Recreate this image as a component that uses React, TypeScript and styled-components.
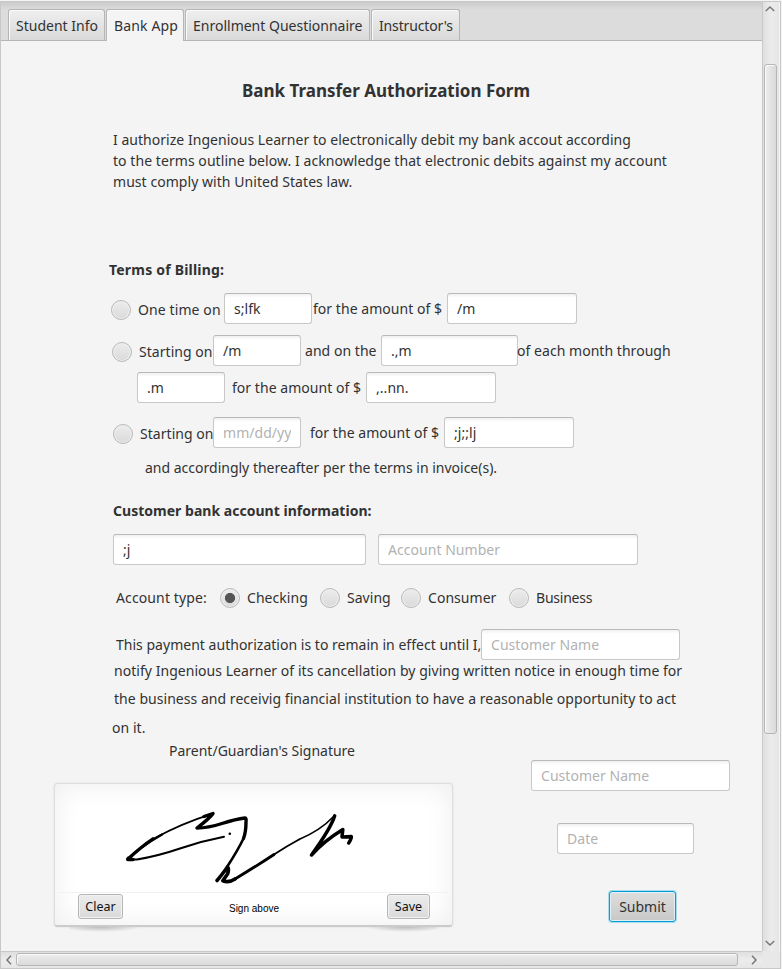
import React from "react";
import styled, { createGlobalStyle } from "styled-components";

const GlobalStyle = createGlobalStyle`
  * { box-sizing: border-box; }
  body {
    margin: 0;
    background: #f4f4f4;
    color: #323232;
    font: 14px/21px "Noto Sans", sans-serif;
    letter-spacing: 0.04px;
  }
`;

const Page = styled.div`
  width: 782px;
  height: 969px;
  padding-top: 1px;
  overflow: hidden;
  background: #f4f4f4;
`;

const Window = styled.div`
  display: grid;
  grid-template-columns: 761px 18px;
  grid-template-rows: 949px 17px;
  width: 781px;
  height: 968px;
  border: 1px solid #c8c8c8;
`;

const Pane = styled.main`
  overflow: hidden;
`;

const TabBar = styled.nav`
  display: flex;
  align-items: flex-end;
  gap: 1px;
  height: 39px;
  padding-left: 7px;
  border-bottom: 1px solid #b5b5b5;
  background: linear-gradient(#cbcbcb, #dcdcdc 8px);
`;

const Tab = styled.button<{ $w: number; $active?: boolean; $ls?: number }>`
  flex: none;
  width: ${(p) => p.$w}px;
  height: ${(p) => (p.$active ? 32 : 31)}px;
  margin-bottom: ${(p) => (p.$active ? -1 : 0)}px;
  padding: ${(p) => (p.$active ? "5px 0 5px 7px" : "5px 0 4px 7px")};
  border: 1px solid #b5b5b5;
  border-bottom: 0;
  border-radius: 3px 3px 0 0;
  background: ${(p) => (p.$active ? "#f4f4f4" : "linear-gradient(#efefef, #d9d9d9)")};
  box-shadow: inset 1px 1px 0 #fafafa;
  color: inherit;
  font: inherit;
  letter-spacing: ${(p) => p.$ls ?? 0}px;
  text-align: left;
  white-space: nowrap;
`;

const Form = styled.form`
  display: flex;
  flex-direction: column;
`;

const Title = styled.h1`
  margin: 37px 0 0 241px;
  font-size: 17px;
  line-height: 25px;
  letter-spacing: 0;
`;

const Heading = styled.h2<{ $top: number; $left: number; $ls?: number }>`
  margin: ${(p) => p.$top}px 0 0 ${(p) => p.$left}px;
  font-size: 14px;
  line-height: 21px;
  letter-spacing: ${(p) => p.$ls ?? 0}px;
`;

const Row = styled.div<{ $top: number; $left: number }>`
  display: flex;
  align-items: center;
  height: 31px;
  margin-top: ${(p) => p.$top}px;
  padding-left: ${(p) => p.$left}px;
`;

const Text = styled.span<{ $w?: number; $ml?: number; $low?: boolean; $ls?: number }>`
  flex: none;
  width: ${(p) => (p.$w ? `${p.$w}px` : "auto")};
  margin-left: ${(p) => p.$ml ?? 0}px;
  padding-top: ${(p) => (p.$low ? 2 : 0)}px;
  letter-spacing: ${(p) => p.$ls ?? 0.04}px;
  white-space: nowrap;
`;

const Line = styled.div<{ $top: number; $left: number; $ls?: number }>`
  height: 21px;
  margin: ${(p) => p.$top}px 0 0 ${(p) => p.$left}px;
  letter-spacing: ${(p) => p.$ls ?? 0.04}px;
  white-space: nowrap;
`;

const Field = styled.input<{ $w: number; $ml?: number }>`
  flex: none;
  width: ${(p) => p.$w}px;
  height: 31px;
  margin: 0 0 0 ${(p) => p.$ml ?? 0}px;
  padding: 0 9px;
  border: 1px solid #c8c8c8;
  border-top-color: #b9b9b9;
  border-radius: 3px;
  outline: 0;
  background: linear-gradient(#f0f0f0, #fff 4px);
  color: #323232;
  font: inherit;
  letter-spacing: inherit;
  &::placeholder { color: #b2b2b2; opacity: 1; }
`;

const Option = styled.label<{ $w?: number; $ls?: number }>`
  display: flex;
  flex: none;
  align-items: center;
  gap: 7px;
  width: ${(p) => (p.$w ? `${p.$w}px` : "auto")};
  padding-top: 2px;
  letter-spacing: ${(p) => p.$ls ?? 0.04}px;
  white-space: nowrap;
`;

const Radio = styled.span<{ $on?: boolean }>`
  flex: none;
  width: 20px;
  height: 20px;
  border: 1px solid #b9b9b9;
  border-radius: 50%;
  background: ${(p) => (p.$on ? "radial-gradient(circle, #545454 4.7px, transparent 5.4px)," : "")}
    linear-gradient(#ececec, #dadada);
  box-shadow: inset 0 0 0 1px #f0f0f0;
`;

const Bottom = styled.section`
  display: grid;
  grid-template-columns: 474px 1fr;
  align-items: start;
`;

const Pad = styled.div`
  display: flex;
  flex-direction: column;
  position: relative;
  width: 399px;
  height: 144px;
  margin: 22px 0 0 53px;
  border: 1px solid #dedede;
  border-bottom: 2px solid #cbcbcb;
  border-radius: 4px;
  background: #fff;
  box-shadow: inset 0 0 28px #ededed, 0 0 2px #d8d8d8;
`;

const PadShadow = styled.div`
  position: absolute;
  left: 14px;
  right: 14px;
  bottom: -7px;
  height: 5px;
  background:
    radial-gradient(ellipse 40px 5px at 32px 0, #bcbcbc, transparent) 0 0 / 80px 5px no-repeat,
    radial-gradient(ellipse 40px 5px at 48px 0, #bcbcbc, transparent) 100% 0 / 80px 5px no-repeat;
`;

const Drawing = styled.svg`
  display: block;
  width: 397px;
  height: 108px;
  flex: none;
`;

const PadFooter = styled.div`
  display: flex;
  justify-content: space-between;
  height: 33px;
  margin: 0 4px;
  padding: 1px 18px 0 19px;
  border-top: 1px solid #f2f2f2;
`;

const PadButton = styled.button<{ $w: number }>`
  width: ${(p) => p.$w}px;
  height: 25px;
  padding: 1px 0 0;
  border: 1px solid #b5b5b5;
  border-radius: 3px;
  background: linear-gradient(#ececec, #dadada);
  box-shadow: inset 0 0 0 1px #f2f2f2;
  color: #111;
  font: 12.5px/20px "Noto Sans", sans-serif;
  letter-spacing: 0;
`;

const PadHint = styled.span`
  padding: 5px 2px 0 0;
  color: #000;
  font: 10px/20px "Liberation Sans", sans-serif;
  letter-spacing: 0;
`;

const SignOff = styled.div`
  display: flex;
  flex-direction: column;
  align-items: flex-start;
  margin-top: -1px;
  padding-left: 56px;
`;

const DateRow = styled.div`
  display: flex;
  margin: 32px 0 0 26px;
`;

const SubmitButton = styled.button`
  width: 67px;
  height: 31px;
  margin: 37px 0 0 78px;
  padding: 0;
  border: 1px solid #039ed3;
  border-radius: 3px;
  background: linear-gradient(#dedede, #c8c8c8);
  box-shadow: 0 0 0 1px #a9dbec, inset 0 0 0 1px #dff0f6;
  color: #323232;
  font: 14px/21px "Noto Sans", sans-serif;
`;

const VBar = styled.div`
  display: flex;
  flex-direction: column;
  align-items: center;
  padding: 0 2px 1px 0;
  border-left: 1px solid #c8c8c8;
  border-right: 1px solid #f4f4f4;
  background: linear-gradient(90deg, #dfdfdf, #ececec 50%, #e6e6e6);
`;

const HBar = styled.div`
  display: flex;
  align-items: center;
  padding: 0 1px 1px 1px;
  border-top: 1px solid #c8c8c8;
  background: linear-gradient(#dfdfdf, #ececec 50%, #e6e6e6);
`;

const Corner = styled.div`
  background: #e8e8e8;
`;

const VThumb = styled.div`
  width: 13px;
  height: 670px;
  margin: 50px 0 auto;
  border: 1px solid #b5b5b5;
  border-radius: 3px;
  background: linear-gradient(90deg, #ededed, #dadada);
  box-shadow: inset 1px 1px 0 #fafafa;
`;

const HThumb = styled.div`
  width: 722px;
  height: 13px;
  margin: 0 auto 0 2px;
  border: 1px solid #b5b5b5;
  border-radius: 3px;
  background: linear-gradient(#ededed, #dadada);
  box-shadow: inset 1px 1px 0 #fafafa;
`;

const Chevron = styled.svg<{ $turn: number }>`
  flex: none;
  width: 12px;
  height: 12px;
  transform: rotate(${(p) => p.$turn}deg);
`;

const Arrow = (props: { turn: number }) => (
  <Chevron viewBox="0 0 12 12" $turn={props.turn}>
    <path d="M1.8 9 L6 5 L10.2 9" fill="none" stroke="#777" strokeWidth="1.5" />
  </Chevron>
);

const Signature = () => (
  <Drawing viewBox="55 784 397 108">
    <g fill="none" stroke="#000" strokeLinecap="round" strokeLinejoin="round">
      <path d="M224 836.8 Q202 841 180 848.5 T137 859.5 L128 859.5" strokeWidth="2" />
      <path d="M128 859 Q142 846 153 838.8" strokeWidth="3.2" />
      <path d="M128.5 858.5 Q140 847 162 834.5" strokeWidth="2.4" />
      <path d="M133 859.5 L127.8 859.5 L128.3 858.5" strokeWidth="3.6" />
      <path d="M155 838 Q180 824 212 813.8" strokeWidth="1.9" />
      <path d="M204 816.5 L213 813.5 Q210 818 197 828 Q208 828 222 823.5 T245 818 Q246.5 818 246 822 Q246 832 243.5 838.5" strokeWidth="3.4" />
      <path d="M243.5 838.5 Q238 850 227 867" strokeWidth="2.6" />
      <path d="M217 880.5 Q221 876 227.5 867 Q229.5 869 227.5 874 L222.8 880.8 Q229 883 235 879" strokeWidth="3.6" />
      <path d="M235 879 Q255 867 274 854.5" strokeWidth="2.9" />
      <path d="M274 854.5 Q287 846 299 839.5" strokeWidth="1.9" />
      <path d="M299 839.5 Q321 830 333 817" strokeWidth="1.6" />
      <path d="M334.7 815.8 Q331 828 311.5 855 Q324 841 342.8 829.5 L342 837 Q348 837 351.3 836.5 Q351.5 839 348.7 843" strokeWidth="3.5" />
    </g>
    <circle cx="229.8" cy="833.8" r="1.3" />
  </Drawing>
);

export default function App() {
  return (
    <Page>
      <GlobalStyle />
      <Window>
        <Pane>
          <TabBar>
            <Tab $w={97}>Student Info</Tab>
            <Tab $w={78} $active $ls={0.15}>Bank App</Tab>
            <Tab $w={185}>Enrollment Questionnaire</Tab>
            <Tab $w={89} $ls={-0.15}>Instructor's</Tab>
          </TabBar>
          <Form>
            <Title>Bank Transfer Authorization Form</Title>
            <Line $top={26} $left={112} $ls={0.03}>I authorize Ingenious Learner to electronically debit my bank accout according</Line>
            <Line $top={0} $left={112} $ls={0.06}>to the terms outline below. I acknowledge that electronic debits against my account</Line>
            <Line $top={0} $left={112} $ls={0.05}>must comply with United States law.</Line>
            <Heading $top={67} $left={108} $ls={0.2}>Terms of Billing:</Heading>
            <Row $top={13} $left={110}>
              <Option $w={113} $ls={0.1}><Radio />One time on</Option>
              <Field $w={88} defaultValue="s;lfk" />
              <Text $w={134} $ml={1}>for the amount of $</Text>
              <Field $w={130} defaultValue="/m" />
            </Row>
            <Row $top={11} $left={111}>
              <Option $w={101}><Radio />Starting on</Option>
              <Field $w={88} defaultValue="/m" />
              <Text $w={76} $ml={4}>and on the</Text>
              <Field $w={137} defaultValue=".,m" />
              <Text $ml={-1}>of each month through</Text>
            </Row>
            <Row $top={6} $left={136}>
              <Field $w={88} defaultValue=".m" />
              <Text $w={134} $ml={7}>for the amount of $</Text>
              <Field $w={130} defaultValue=",..nn." />
            </Row>
            <Row $top={14} $left={112}>
              <Option $w={100}><Radio />Starting on</Option>
              <Field $w={88} placeholder="mm/dd/yy" />
              <Text $w={134} $ml={9}>for the amount of $</Text>
              <Field $w={130} defaultValue=";j;;lj" />
            </Row>
            <Line $top={9} $left={144} $ls={0}>and accordingly thereafter per the terms in invoice(s).</Line>
            <Heading $top={22} $left={112} $ls={0.02}>Customer bank account information:</Heading>
            <Row $top={13} $left={112}>
              <Field $w={253} defaultValue=";j" />
              <Field $w={260} $ml={12} placeholder="Account Number" />
            </Row>
            <Row $top={16} $left={115}>
              <Text $w={104} $low $ls={0.12}>Account type:</Text>
              <Option $w={100}><Radio $on />Checking</Option>
              <Option $w={81}><Radio />Saving</Option>
              <Option $w={108}><Radio />Consumer</Option>
              <Option $ls={-0.22}><Radio />Business</Option>
            </Row>
            <Row $top={17} $left={115}>
              <Text $w={365} $ls={0.02}>This payment authorization is to remain in effect until I,</Text>
              <Field $w={199} placeholder="Customer Name" />
            </Row>
            <Line $top={0} $left={113}>notify Ingenious Learner of its cancellation by giving written notice in enough time for</Line>
            <Line $top={7} $left={113}>the business and receivig financial institution to have a reasonable opportunity to act</Line>
            <Line $top={8} $left={111}>on it.</Line>
            <Line $top={2} $left={168} $ls={0}>Parent/Guardian's Signature</Line>
            <Bottom>
              <Pad>
                <Signature />
                <PadFooter>
                  <PadButton type="button" $w={45}>Clear</PadButton>
                  <PadHint>Sign above</PadHint>
                  <PadButton type="button" $w={43}>Save</PadButton>
                </PadFooter>
                <PadShadow />
              </Pad>
              <SignOff>
                <Field $w={199} placeholder="Customer Name" />
                <DateRow><Field $w={137} placeholder="Date" /></DateRow>
                <SubmitButton type="button">Submit</SubmitButton>
              </SignOff>
            </Bottom>
          </Form>
        </Pane>
        <VBar>
          <Arrow turn={0} />
          <VThumb />
          <Arrow turn={180} />
        </VBar>
        <HBar>
          <Arrow turn={-90} />
          <HThumb />
          <Arrow turn={90} />
        </HBar>
        <Corner />
      </Window>
    </Page>
  );
}
